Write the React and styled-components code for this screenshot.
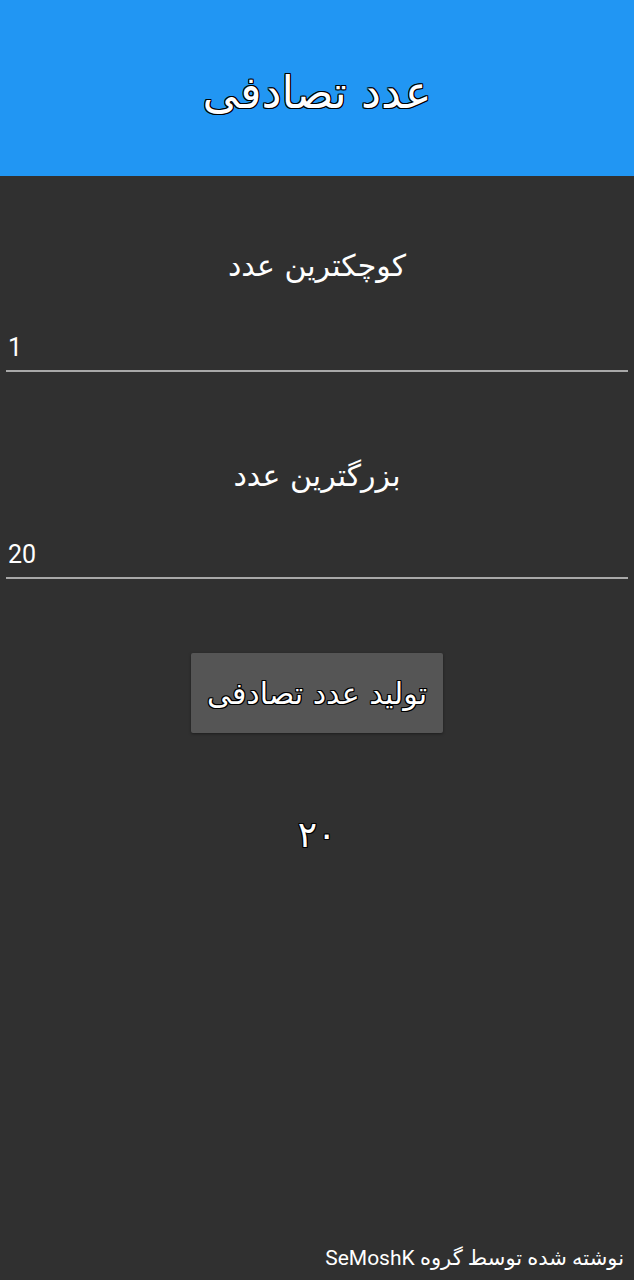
import React, { useState } from 'react';
import styled, { createGlobalStyle } from 'styled-components';

const GlobalStyle = createGlobalStyle`
  html, body {
    margin: 0;
    padding: 0;
    background: #303030;
  }
  * {
    box-sizing: border-box;
  }
`;

const outline = `
  -1px -1px 0 #000, 1px -1px 0 #000, -1px 1px 0 #000, 1px 1px 0 #000,
  0 -1px 0 #000, 0 1px 0 #000, -1px 0 0 #000, 1px 0 0 #000
`;

const Page = styled.div`
  min-height: 1280px;
  display: flex;
  flex-direction: column;
  background: #303030;
  color: #fff;
  font-family: 'DejaVu Sans', 'Noto Sans', sans-serif;
`;

const Header = styled.header`
  height: 176px;
  background: #2196f3;
  display: flex;
  align-items: center;
  justify-content: center;
`;

const Title = styled.h1`
  margin: 0;
  padding-top: 8px;
  font-size: 45px;
  font-weight: normal;
  color: #fff;
  text-shadow: ${outline};
  direction: rtl;
`;

const Form = styled.main`
  display: flex;
  flex-direction: column;
  align-items: center;
  padding: 0 6px;
`;

const Label = styled.div`
  margin-top: ${(p) => p.$top}px;
  height: 40px;
  line-height: 40px;
  font-size: 30px;
  direction: rtl;
`;

const Input = styled.input`
  margin-top: ${(p) => p.$top}px;
  width: 100%;
  height: 48px;
  padding: 0 2px;
  background: transparent;
  border: none;
  border-bottom: 2px solid #a8a8a8;
  color: #fff;
  font-family: Roboto, 'Liberation Sans', sans-serif;
  font-size: 25px;
  outline: none;
`;

const Button = styled.button`
  margin-top: 74px;
  width: 252px;
  height: 80px;
  background: #555555;
  border: none;
  border-radius: 2px;
  box-shadow: 0 1px 3px rgba(0, 0, 0, 0.4);
  color: #fff;
  font-family: 'DejaVu Sans', sans-serif;
  font-size: 30px;
  text-shadow: ${outline};
  direction: rtl;
  cursor: pointer;
`;

const Result = styled.div`
  margin-top: 82px;
  height: 40px;
  line-height: 40px;
  font-size: 36px;
  text-shadow: ${outline};
`;

const Footer = styled.footer`
  margin-top: auto;
  padding: 0 10px 7px;
  line-height: 30px;
  font-family: Roboto, 'DejaVu Sans', sans-serif;
  font-size: 21px;
  text-align: right;
  direction: rtl;
`;

const toPersian = (n) => String(n).replace(/\d/g, (d) => '۰۱۲۳۴۵۶۷۸۹'[d]);

export default function App() {
  const [min, setMin] = useState('1');
  const [max, setMax] = useState('20');
  const [result, setResult] = useState(20);

  const generate = () => {
    const a = parseInt(min, 10) || 0;
    const b = parseInt(max, 10) || 0;
    setResult(Math.floor(Math.random() * (b - a + 1)) + a);
  };

  return (
    <>
      <GlobalStyle />
      <Page>
        <Header>
          <Title>عدد تصادفی</Title>
        </Header>
        <Form>
          <Label $top={70}>کوچکترین عدد</Label>
          <Input $top={38} value={min} onChange={(e) => setMin(e.target.value)} />
          <Label $top={84}>بزرگترین عدد</Label>
          <Input $top={35} value={max} onChange={(e) => setMax(e.target.value)} />
          <Button onClick={generate}>تولید عدد تصادفی</Button>
          <Result>{toPersian(result)}</Result>
        </Form>
        <Footer>نوشته شده توسط گروه SeMoshK</Footer>
      </Page>
    </>
  );
}
